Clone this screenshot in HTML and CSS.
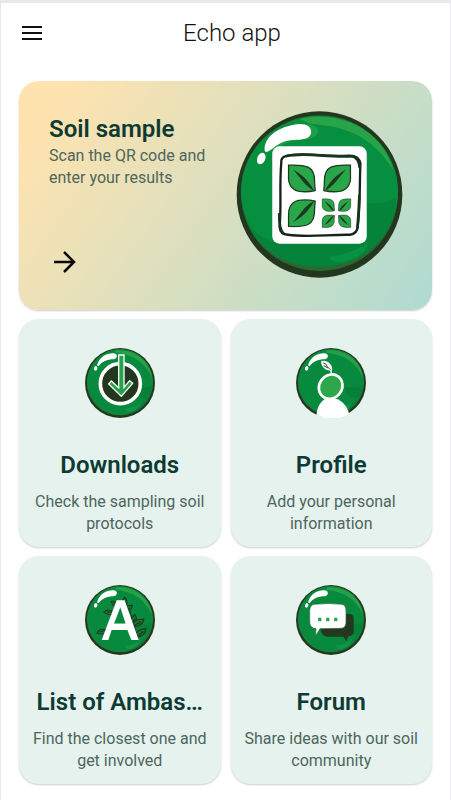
FILE: index.html
```html
<!DOCTYPE html>
<html lang="en">
<head>
<meta charset="utf-8">
<meta name="viewport" content="width=device-width, initial-scale=1">
<title>Echo app</title>
<link rel="stylesheet" href="styles.css">
</head>
<body>
<svg class="defs" aria-hidden="true">
  <symbol id="ball" viewBox="0 0 210 210">
    <circle cx="105" cy="105" r="105" fill="#23391f"/>
    <circle cx="105" cy="103" r="99" fill="#2f7a35"/>
    <circle cx="105" cy="102" r="98" fill="#088a3e"/>
    <path d="M92 7C150 2 195 40 202 90C181 44 146 20 92 14Z" fill="#27a149"/>
    <path d="M145 117Q175 120 201 115C198 155 165 195 125 199C145 182 165 177 185 150Q150 155 145 117Z" fill="#078139"/>
    <path d="M122 180Q145 183 168 163Q163 184 137 193Q115 190 122 180Z" fill="#119449"/>
    <path d="M37 49C45 25 68 14 87 16C99 18 98 31 87 34C65 34 51 42 42 53Q35 56 37 49Z" fill="#fff"/>
    <ellipse cx="32" cy="61" rx="5" ry="7" fill="#fff" transform="rotate(20 32 61)"/>
  </symbol>
  <symbol id="leaf" viewBox="0 0 90 90">
    <path d="M4 4C25 3 46 2 64 10C82 19 85 38 84 58L86 82Q60 88 34 84C11 78 2 58 4 38Z" fill="#2aa64a" stroke="#1d3a20" stroke-width="4"/>
    <path d="M18 17Q48 34 63 53Q76 68 83 83Q66 74 55 62Q38 41 18 17Z" fill="#1d3a20"/>
  </symbol>
  <symbol id="sprig" viewBox="0 0 30 20">
    <path d="M2 17C2 6 13 1 28 3C26 13 16 20 2 17Z" fill="#167a36" stroke="#203a1f" stroke-width="3"/>
    <path d="M3 17L21 8" stroke="#203a1f" stroke-width="3"/>
  </symbol>
</svg>

<header class="topbar">
  <button class="menu" type="button" aria-label="Menu">
    <svg viewBox="0 0 24 24" aria-hidden="true"><path d="M2 6H22M2 12H22M2 18H22" fill="none" stroke="#111" stroke-width="2"/></svg>
  </button>
  <h1 class="apptitle">Echo app</h1>
</header>

<main class="cards">
  <a class="card hero" href="#soil-sample">
    <div class="herotext">
      <h2 class="title">Soil sample</h2>
      <p class="desc">Scan the QR code and enter your results</p>
      <svg class="arrow" viewBox="0 0 32 32" aria-hidden="true"><path d="M5 16H25M15 6L25 16L15 26" fill="none" stroke="#090909" stroke-width="2.5"/></svg>
    </div>
    <svg class="heroicon" viewBox="20 33 502 502" aria-hidden="true">
      <ellipse cx="271" cy="284" rx="249" ry="250" fill="#23371f"/>
      <ellipse cx="271" cy="280" rx="236" ry="234" fill="#2b6830"/>
      <ellipse cx="271" cy="274" rx="236" ry="226" fill="#078f40"/>
      <path d="M210 56C350 28 463 100 493 210C440 125 368 78 244 72Z" fill="#29a349"/>
      <path d="M410 309Q475 314 501 292C502 410 398 504 270 501C145 500 72 430 48 354Q86 426 155 430L414 430Z" fill="#05833b"/>
      <path d="M303 471Q360 465 415 430C420 451 378 485 328 488Q298 486 303 471Z" fill="#099143"/>
      <path d="M226 73C260 72 278 88 258 108C235 125 200 112 158 136L110 160Q139 101 226 73Z" fill="#1ba047"/>
      <path d="M106 151C104 112 144 84 190 75C226 67 247 78 246 98C244 119 216 120 194 120C159 121 143 136 126 149Q107 162 106 151Z" fill="#fff"/>
      <ellipse cx="96" cy="176" rx="12" ry="18" fill="#fff" transform="rotate(22 96 176)"/>
      <rect x="129" y="139" width="284" height="293" rx="22" fill="#fff"/>
      <path d="M172 168C220 154 266 173 360 167Q389 166 394 191C391 258 394 311 386 379Q385 402 362 405C294 404 238 414 176 405Q153 404 151 382C157 320 150 259 156 190Q154 171 172 168Z" fill="none" stroke="#17231a" stroke-width="7"/>
      <path d="M170 169C230 155 290 174 368 169Q389 172 392 205M150 340Q149 389 163 402M391 285Q389 338 385 386" fill="none" stroke="#17351c" stroke-width="8"/>
      <use href="#leaf" x="174" y="192" width="88" height="88"/>
      <use href="#leaf" width="88" height="88" transform="translate(368 192) scale(-1 1)"/>
      <use href="#leaf" width="88" height="88" transform="translate(174 384) scale(1 -1)"/>
      <use href="#leaf" x="277" y="295" width="41" height="42"/>
      <use href="#leaf" width="41" height="42" transform="translate(367 295) scale(-1 1)"/>
      <use href="#leaf" width="41" height="42" transform="translate(277 385) scale(1 -1)"/>
      <use href="#leaf" width="41" height="42" transform="translate(367 385) scale(-1 -1)"/>
    </svg>
  </a>

  <a class="card tile" href="#downloads">
    <svg class="icon" viewBox="0 0 210 210" aria-hidden="true">
      <use href="#ball" width="210" height="210"/>
      <circle cx="106" cy="107" r="60" fill="#23371f" stroke="#fff" stroke-width="11"/>
      <path d="M101 21H117V118L134 98L143 106L109 145L71 108L79 99L101 119Z" fill="#25a34a" stroke="#fff" stroke-width="4"/>
    </svg>
    <h2 class="title">Downloads</h2>
    <p class="desc">Check the sampling soil protocols</p>
  </a>

  <a class="card tile" href="#profile">
    <svg class="icon" viewBox="0 0 210 210" aria-hidden="true">
      <use href="#ball" width="210" height="210"/>
      <path d="M62 212V197C64 174 78 149 104 149C134 149 155 175 159 197V212Z" fill="#fff"/>
      <path d="M63 197C71 203 83 209 98 212H60ZM159 197Q145 208 120 212H162Z" fill="#e6f2ed"/>
      <ellipse cx="104" cy="116" rx="34" ry="38" fill="#2ca74b" stroke="#fff" stroke-width="8" transform="rotate(36 104 116)"/>
      <path d="M107 79Q104 72 104 66C88 67 76 55 77 40C97 38 108 51 107 65" fill="#fff" stroke="#fff" stroke-width="3"/>
      <path d="M82 45Q92 47 94 56L103 65M83 53L96 60" fill="none" stroke="#25402a" stroke-width="3"/>
    </svg>
    <h2 class="title">Profile</h2>
    <p class="desc">Add your personal information</p>
  </a>

  <a class="card tile" href="#ambassadors">
    <svg class="icon" viewBox="0 0 210 210" aria-hidden="true">
      <use href="#ball" width="210" height="210"/>
      <path d="M70 155Q72 100 114 49M116 50Q150 90 153 160" fill="none" stroke="#203a1f" stroke-width="3"/>
      <use href="#sprig" width="36" height="24" transform="translate(99 64) rotate(-60)"/>
      <use href="#sprig" width="36" height="24" transform="translate(108 64) rotate(-12)"/>
      <use href="#sprig" width="40" height="28" transform="translate(121 113) rotate(-48)"/>
      <use href="#sprig" width="40" height="27" transform="translate(139 101) rotate(-4)"/>
      <use href="#sprig" width="40" height="28" transform="translate(145 134) rotate(-12)"/>
      <use href="#sprig" width="28" height="20" transform="translate(88 74) rotate(-120)"/>
      <use href="#sprig" width="30" height="20" transform="translate(79 98) rotate(-150)"/>
      <use href="#sprig" width="32" height="22" transform="translate(64 154) rotate(-168)"/>
      <path d="M95 46H119L161 165H139L127 135H80L70 165H50ZM106 67L87 116H122Z" fill="#fff" fill-rule="evenodd"/>
      <path d="M84 116H124V134H78Z" fill="#fff"/>
    </svg>
    <h2 class="title">List of Ambas…</h2>
    <p class="desc">Find the closest one and get involved</p>
  </a>

  <a class="card tile" href="#forum">
    <svg class="icon" viewBox="0 0 210 210" aria-hidden="true">
      <use href="#ball" width="210" height="210"/>
      <path d="M82 87H160Q173 87 173 101V137Q173 153 157 154L151 169L142 155H94Q78 155 74 134Z" fill="#24371f"/>
      <path d="M56 58Q97 53 137 58Q150 60 150 76V113Q149 130 134 130L72 131L59 153L60 131Q42 130 41 112V76Q42 59 56 58Z" fill="#fff" stroke="#33633b" stroke-width="2"/>
      <path d="M66 98H76V109H67ZM90 98H100V109H91ZM114 98H124V109H115Z" fill="#25a34a"/>
    </svg>
    <h2 class="title">Forum</h2>
    <p class="desc">Share ideas with our soil community</p>
  </a>
</main>
</body>
</html>
```
FILE: styles.css
```css
* {
  box-sizing: border-box;
}

body {
  margin: 0;
  min-height: 100vh;
  border: 1px solid #e9e9eb;
  border-top-width: 3px;
  border-bottom: 0;
  background: #fff;
  font-family: Roboto, "Liberation Sans", sans-serif;
}

.defs {
  display: none;
}

.topbar {
  display: flex;
  align-items: center;
  height: 60px;
  padding: 0 30px 0 19px;
}

.menu {
  width: 24px;
  height: 24px;
  padding: 0;
  border: 0;
  background: none;
}

.menu svg {
  display: block;
}

.apptitle {
  flex: 1;
  margin: 0;
  font-size: 24px;
  line-height: 32px;
  font-weight: 300;
  text-align: center;
  color: #111;
}

.cards {
  display: grid;
  grid-template-columns: minmax(0, 1fr) minmax(0, 1fr);
  gap: 9px 10px;
  padding: 18px 18px 16px;
}

.card {
  min-height: 228px;
  border-radius: 20px;
  background: #e6f2ed;
  box-shadow: 0 1px 2px rgba(0, 0, 0, 0.2);
  color: #0d3b33;
  text-decoration: none;
}

.hero {
  grid-column: 1 / -1;
  display: flex;
  align-items: center;
  justify-content: space-between;
  padding: 30px 29px 32px 30px;
  background: linear-gradient(125deg, #ffe3af 8%, #b2dbd0 96%);
}

.herotext {
  display: flex;
  flex-direction: column;
  align-self: stretch;
  flex: 0 1 170px;
  padding-top: 2px;
}

.heroicon {
  width: 167px;
  height: 167px;
}

.arrow {
  width: 32px;
  height: 32px;
  margin-top: auto;
}

.tile {
  display: flex;
  flex-direction: column;
  align-items: center;
  padding: 29px 12px 12px;
  text-align: center;
}

.icon {
  width: 70px;
  height: 70px;
  margin-bottom: 31px;
}

.title {
  max-width: 100%;
  margin: 0;
  overflow: hidden;
  font-size: 24px;
  line-height: 32px;
  font-weight: 600;
  text-overflow: ellipsis;
  white-space: nowrap;
}

.desc {
  margin: 0;
  font-size: 16px;
  line-height: 22px;
  color: #4d665e;
}

.tile .desc {
  margin-top: 10px;
}
```
